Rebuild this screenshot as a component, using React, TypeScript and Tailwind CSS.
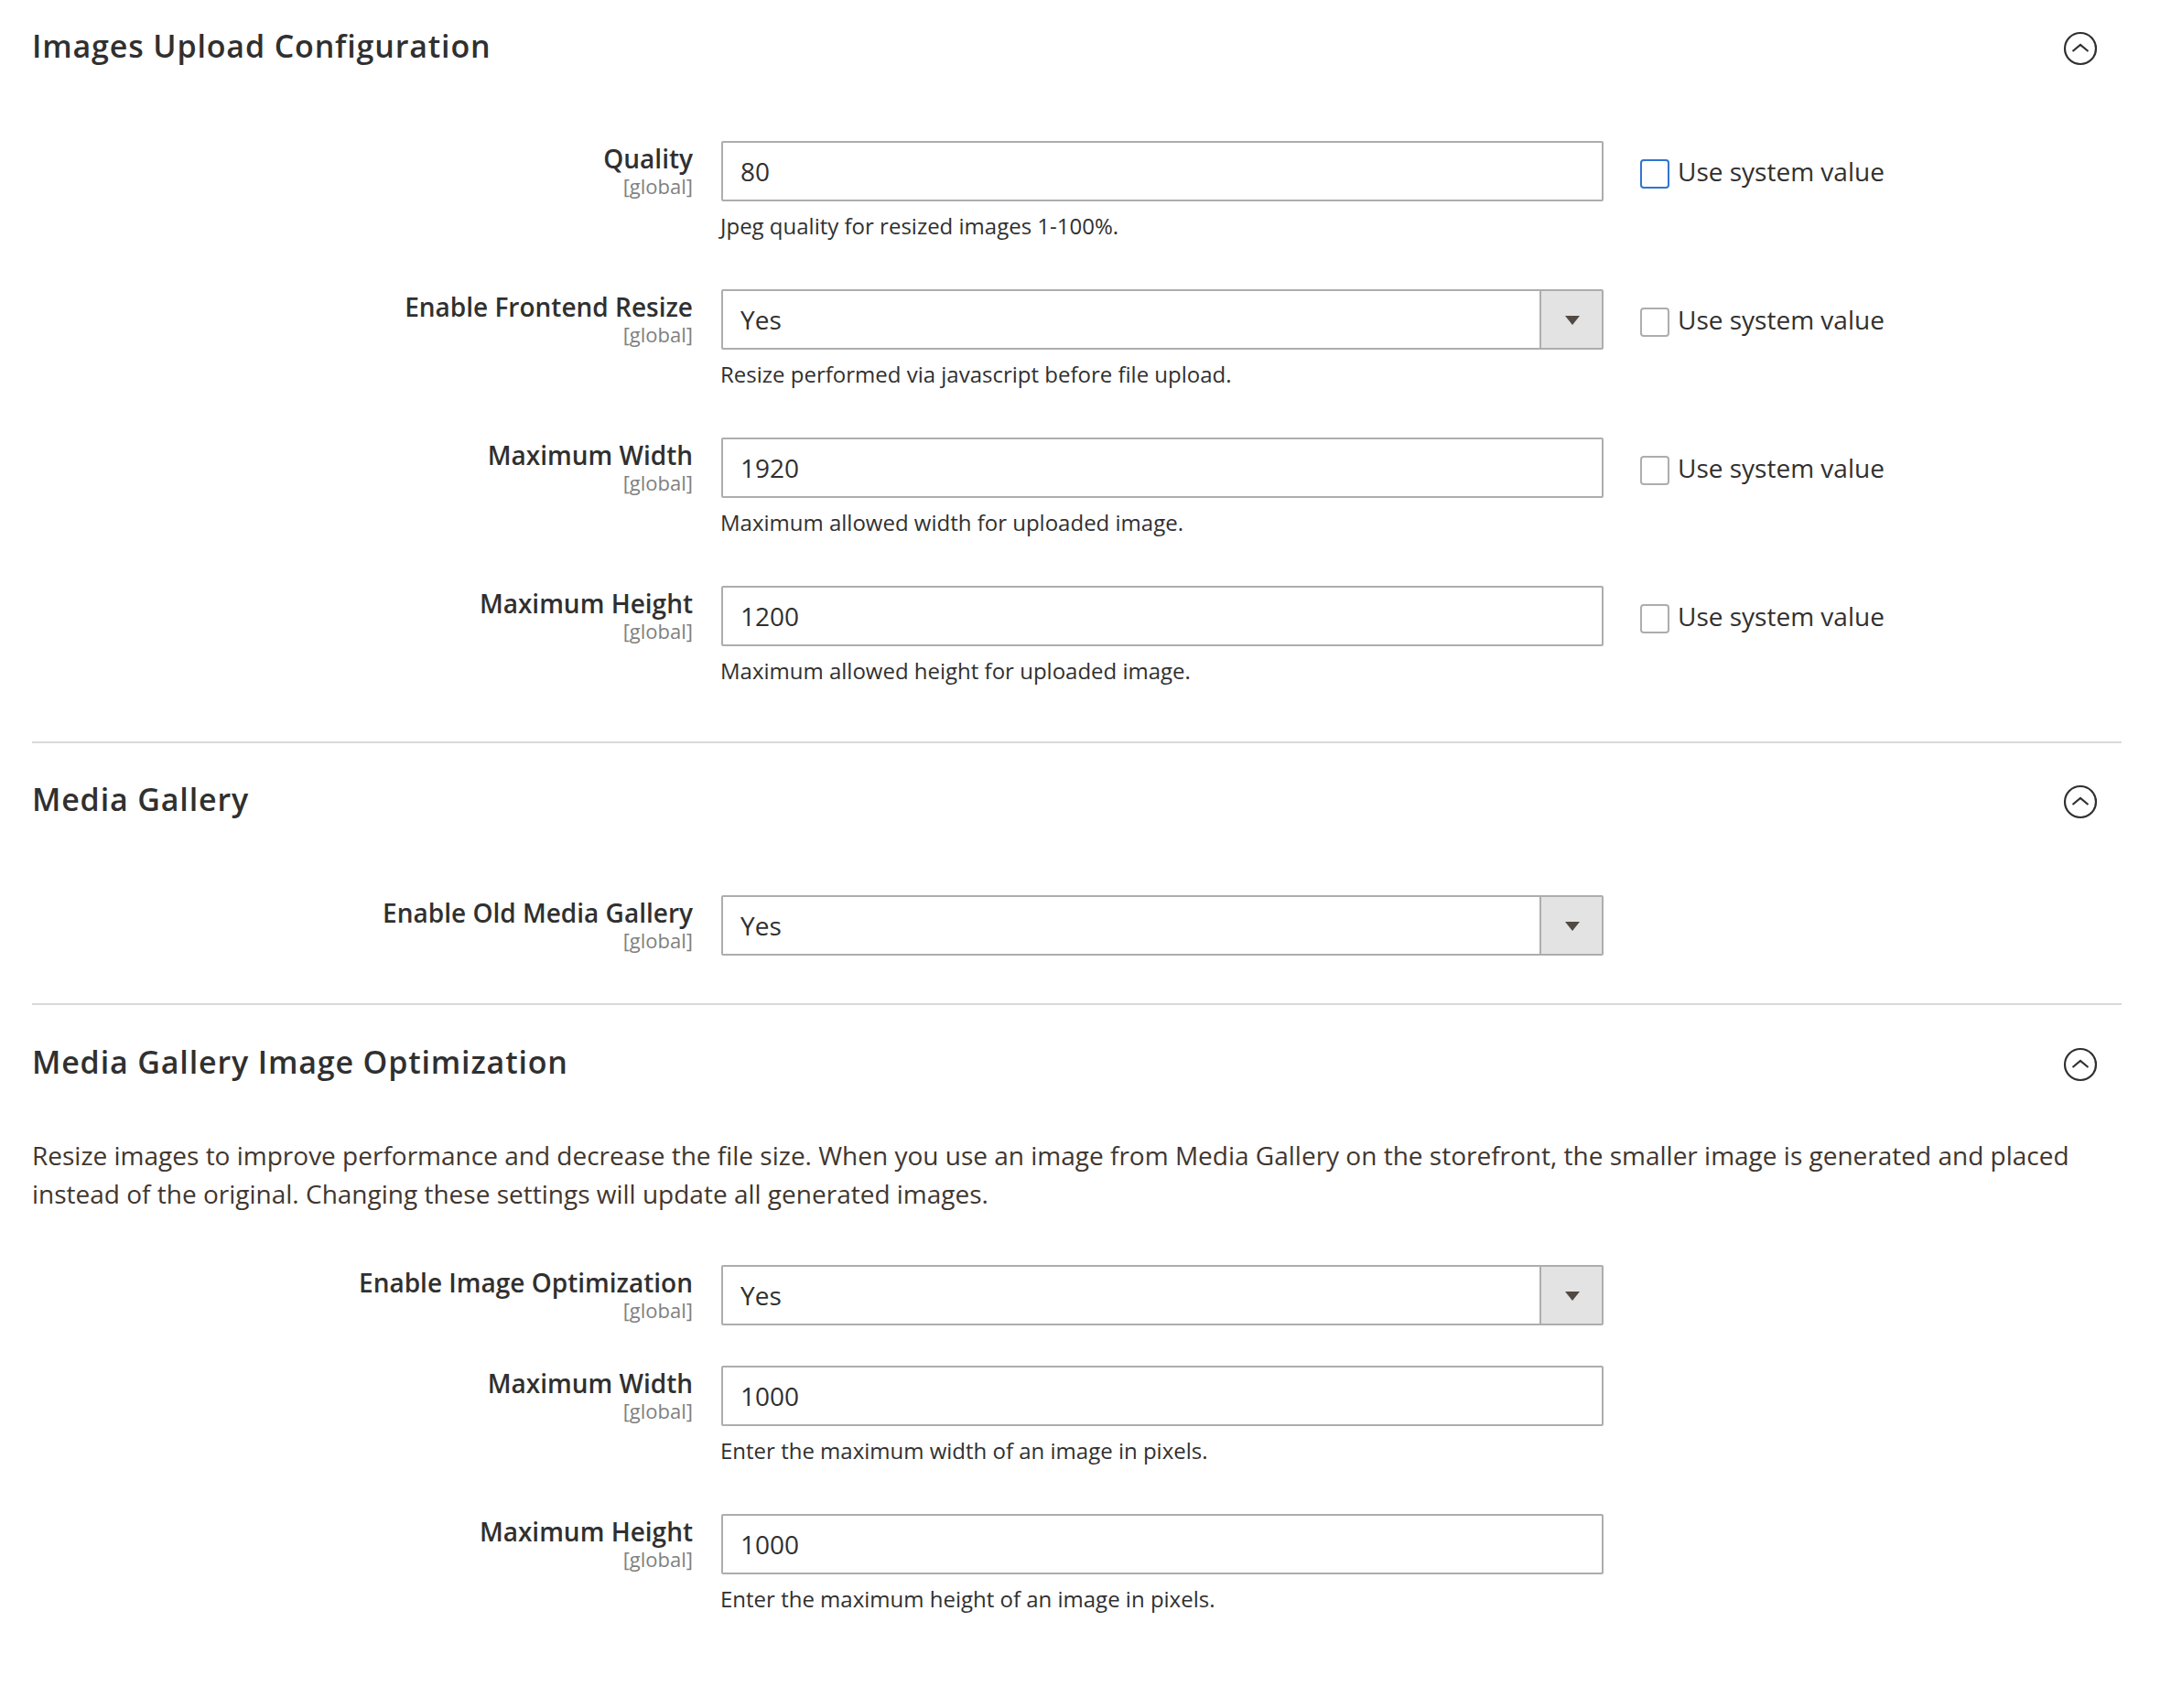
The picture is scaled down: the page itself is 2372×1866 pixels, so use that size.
import { ReactNode } from 'react'

function Chevron() {
  return (
    <svg className="w-[38px] h-[38px] mt-[6px]" viewBox="0 0 38 38" fill="none" stroke="#303030" strokeWidth="2.2">
      <circle cx="19" cy="19" r="17" />
      <path d="M10.5 22 L19 15 L27.5 22" />
    </svg>
  )
}

function Title({ children }: { children: ReactNode }) {
  return (
    <div className="flex items-center justify-between h-[44px] pr-[26px]">
      <h2 className="text-[34px] leading-[44px] font-semibold tracking-[0.85px] text-[#303030]">{children}</h2>
      <Chevron />
    </div>
  )
}

function Row({
  label,
  value,
  select,
  note,
  check,
  focus,
  className,
}: {
  label: string
  value: string
  select?: boolean
  note?: string
  check?: boolean
  focus?: boolean
  className?: string
}) {
  return (
    <div className={`flex ${className ?? ''}`}>
      <div className="w-[722px] text-right">
        <div className="text-[28px] leading-[38px] font-semibold text-[#303030]">{label}</div>
        <div className="text-[22px] leading-[22px] text-[#808080]">[global]</div>
      </div>
      <div className="ml-[31px] w-[964px]">
        <div className="flex h-[66px] border-2 border-[#adadad] rounded-[2px] bg-white">
          <div className="flex-1 pl-[19px] text-[28px] leading-[62px] text-[#303030]">{value}</div>
          {select && (
            <div className="w-[68px] flex items-center justify-center border-l-2 border-[#adadad] bg-[#e3e3e3]">
              <div className="w-0 h-0 ml-[2px] mt-[2px] border-x-[8px] border-x-transparent border-t-[10px] border-t-[#514943]" />
            </div>
          )}
        </div>
        {note && <p className="mt-[9px] -ml-px text-[24px] leading-[36px] text-[#303030]">{note}</p>}
      </div>
      {check && (
        <div className="ml-[40px] h-[66px] flex items-center">
          <div
            className={`w-[32px] h-[32px] mt-[5px] rounded-[4px] border-2 bg-white ${focus ? 'border-[#2f75cf]' : 'border-[#adadad]'}`}
          />
          <span className="ml-[9px] text-[28px] leading-[38px] text-[#303030]">Use system value</span>
        </div>
      )}
    </div>
  )
}

export default function App() {
  return (
    <div className="h-[1866px] bg-white pl-[35px] pr-[54px] font-['Open_Sans',sans-serif] overflow-hidden">
      <section className="pt-[28px] pb-[59px] border-b-2 border-[#d9d9d9]">
        <Title>Images Upload Configuration</Title>
        <Row
          className="mt-[82px]"
          label="Quality"
          value="80"
          note="Jpeg quality for resized images 1-100%."
          check
          focus
        />
        <Row
          className="mt-[51px]"
          label="Enable Frontend Resize"
          value="Yes"
          select
          note="Resize performed via javascript before file upload."
          check
        />
        <Row
          className="mt-[51px]"
          label="Maximum Width"
          value="1920"
          note="Maximum allowed width for uploaded image."
          check
        />
        <Row
          className="mt-[51px]"
          label="Maximum Height"
          value="1200"
          note="Maximum allowed height for uploaded image."
          check
        />
      </section>

      <section className="pt-[39px] pb-[52px] border-b-2 border-[#d9d9d9]">
        <Title>Media Gallery</Title>
        <Row className="mt-[83px]" label="Enable Old Media Gallery" value="Yes" select />
      </section>

      <section className="pt-[40px]">
        <Title>Media Gallery Image Optimization</Title>
        <p className="mt-[59px] text-[28px] leading-[42px] text-[#41362f]">
          Resize images to improve performance and decrease the file size. When you use an image from Media Gallery on
          the storefront, the smaller image is generated and placed instead of the original. Changing these settings
          will update all generated images.
        </p>
        <Row className="mt-[57px]" label="Enable Image Optimization" value="Yes" select />
        <Row
          className="mt-[44px]"
          label="Maximum Width"
          value="1000"
          note="Enter the maximum width of an image in pixels."
        />
        <Row
          className="mt-[51px]"
          label="Maximum Height"
          value="1000"
          note="Enter the maximum height of an image in pixels."
        />
      </section>
    </div>
  )
}
